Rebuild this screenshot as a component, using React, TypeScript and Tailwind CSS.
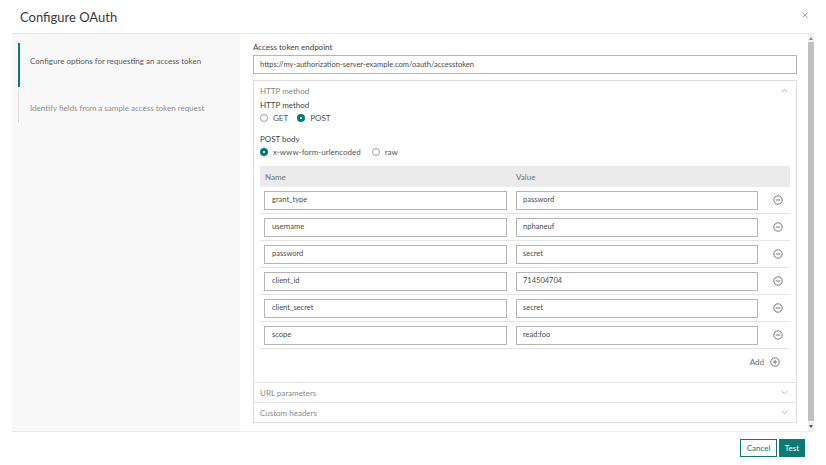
import React from "react";

function Radio({ checked, label }: { checked?: boolean; label: string }) {
  return (
    <div className="flex items-center gap-[5px] h-[10px]">
      {checked ? (
        <span className="w-[8px] h-[8px] rounded-full bg-[#0a7a73] flex items-center justify-center">
          <span className="w-[2px] h-[2px] rounded-full bg-white" />
        </span>
      ) : (
        <span className="w-[8px] h-[8px] rounded-full border border-[#a0a0a0] bg-white" />
      )}
      <span className="text-[8px] leading-[10px] text-[#555555]">{label}</span>
    </div>
  );
}

function Chevron({ up }: { up?: boolean }) {
  return (
    <svg width="7" height="5" viewBox="0 0 7 5" fill="none">
      <path
        d={up ? "M0.8 4L3.5 1.3L6.2 4" : "M0.8 1L3.5 3.7L6.2 1"}
        stroke="#a8a8a8"
        strokeWidth="0.9"
      />
    </svg>
  );
}

function CircleIcon({ plus }: { plus?: boolean }) {
  return (
    <svg width="10" height="10" viewBox="0 0 10 10" fill="none">
      <circle cx="5" cy="5" r="4.2" stroke="#6a6a6a" strokeWidth="0.9" />
      <path d="M2.8 5H7.2" stroke="#6a6a6a" strokeWidth="0.9" />
      {plus && <path d="M5 2.8V7.2" stroke="#6a6a6a" strokeWidth="0.9" />}
    </svg>
  );
}

const rows = [
  ["grant_type", "password"],
  ["username", "nphaneuf"],
  ["password", "secret"],
  ["client_id", "714504704"],
  ["client_secret", "secret"],
  ["scope", "read:foo"],
];

export default function App() {
  return (
    <div
      className="w-[826px] h-[465px] bg-white relative overflow-hidden text-[#555555]"
      style={{ fontFamily: "Lato, 'Open Sans', sans-serif" }}
    >
      {/* header */}
      <div className="mx-3 h-[34px] border-b border-[#e6e6e6] flex items-center justify-between pl-2 pr-[8px]">
        <span className="text-[13px] leading-[16px] text-[#3a3a3a]">Configure OAuth</span>
        <svg width="6" height="6" viewBox="0 0 6 6" className="mr-[-2px] mt-[-4px]">
          <path d="M0.5 0.5L5.5 5.5M5.5 0.5L0.5 5.5" stroke="#8a8a8a" strokeWidth="0.8" />
        </svg>
      </div>

      {/* body */}
      <div className="mx-3 h-[398px] flex border-b border-[#ececec]">
        {/* left nav */}
        <div className="w-[228px] bg-[#f8f8f8] pt-[9px] pl-[6px]">
          <div className="h-[44px] border-l-2 border-[#0a7a73] pl-[10px] pt-[13px]">
            <div className="text-[8px] leading-[10px] text-[#595959]">
              Configure options for requesting an access token
            </div>
          </div>
          <div className="mt-[3px] h-[33px] border-l border-[#dddddd] pl-[11px] pt-[13px]">
            <div className="text-[8px] leading-[10px] text-[#8f8f8f]">
              Identify fields from a sample access token request
            </div>
          </div>
        </div>

        {/* right content */}
        <div className="flex-1 flex">
          <div className="flex-1 pl-[13px] pr-[11px] pt-[8px]">
            <div className="text-[8px] text-[#3f3f3f] h-[13px] leading-[10px]">
              Access token endpoint
            </div>
            <div className="h-[19px] border border-[#b5b5b5] flex items-center pl-[6px] text-[7.5px] leading-[10px] text-[#4a4a4a]">
              https://my-authorization-server-example.com/oauth/accesstoken
            </div>

            {/* accordion */}
            <div className="mt-[6px] border border-[#dedede]">
              <div className="h-[19px] flex items-center justify-between pl-[6px] pr-[8px]">
                <span className="text-[8px] leading-[10px] text-[#858585]">HTTP method</span>
                <Chevron up />
              </div>
              <div className="pl-[6px] pr-[6px]">
                <div className="text-[8px] text-[#3f3f3f] h-[10px] leading-[10px]">
                  HTTP method
                </div>
                <div className="flex items-center gap-[9px] mt-[3px]">
                  <Radio label="GET" />
                  <Radio checked label="POST" />
                </div>
                <div className="text-[8px] text-[#3f3f3f] h-[10px] leading-[10px] mt-[11px]">
                  POST body
                </div>
                <div className="flex items-center gap-[11px] mt-[3px]">
                  <Radio checked label="x-www-form-urlencoded" />
                  <Radio label="raw" />
                </div>

                {/* table */}
                <div className="mt-[9px]">
                  <div className="h-[21px] bg-[#ebebeb] flex items-center text-[8px] leading-[10px] text-[#707070]">
                    <span className="w-[256px] pl-[5px]">Name</span>
                    <span>Value</span>
                  </div>
                  {rows.map(([n, v]) => (
                    <div
                      key={n}
                      className="h-[27px] border-b border-[#e4e4e4] flex items-center pl-[4px]"
                    >
                      <div className="w-[243px] h-[19px] border border-[#b5b5b5] flex items-center pl-[7px] text-[7.5px] leading-[10px] text-[#4a4a4a]">
                        {n}
                      </div>
                      <div className="ml-[9px] w-[242px] h-[19px] border border-[#b5b5b5] flex items-center pl-[6px] text-[7.5px] leading-[10px] text-[#4a4a4a]">
                        {v}
                      </div>
                      <div className="ml-[15px] flex items-center">
                        <CircleIcon />
                      </div>
                    </div>
                  ))}
                  <div className="h-[26px] flex items-center justify-end pr-[10px] gap-[6px]">
                    <span className="text-[8px] leading-[10px] text-[#6a6a6a]">Add</span>
                    <CircleIcon plus />
                  </div>
                </div>
              </div>
              <div className="h-[7px]" />
              <div className="border-t border-[#e4e4e4] h-[20px] flex items-center justify-between pl-[6px] pr-[8px]">
                <span className="text-[8px] leading-[10px] text-[#8a8a8a]">URL parameters</span>
                <Chevron />
              </div>
              <div className="border-t border-[#e4e4e4] h-[20px] flex items-center justify-between pl-[6px] pr-[8px]">
                <span className="text-[8px] leading-[10px] text-[#8a8a8a]">Custom headers</span>
                <Chevron />
              </div>
            </div>
          </div>

          {/* scrollbar */}
          <div className="w-[6px] bg-[#f1f1f1] flex flex-col items-center">
            <div className="h-[8px] flex items-center justify-center">
              <svg width="4" height="3" viewBox="0 0 4 3">
                <path d="M0 3L2 0L4 3Z" fill="#8a8a8a" />
              </svg>
            </div>
            <div className="w-[6px] flex-1 bg-[#c1c1c1]" />
            <div className="h-[10px] flex items-center justify-center">
              <svg width="4" height="3" viewBox="0 0 4 3">
                <path d="M0 0L2 3L4 0Z" fill="#505050" />
              </svg>
            </div>
          </div>
        </div>
      </div>

      {/* footer */}
      <div className="flex justify-end items-center gap-[2px] pr-[21px] pt-[7px]">
        <button className="h-[18px] w-[37px] border border-[#0a7a73] bg-white text-[8px] leading-[10px] text-[#0a7a73] flex items-center justify-center">
          Cancel
        </button>
        <button className="h-[18px] w-[26px] bg-[#0a7a73] text-[8px] leading-[10px] text-white flex items-center justify-center">
          Test
        </button>
      </div>
    </div>
  );
}
